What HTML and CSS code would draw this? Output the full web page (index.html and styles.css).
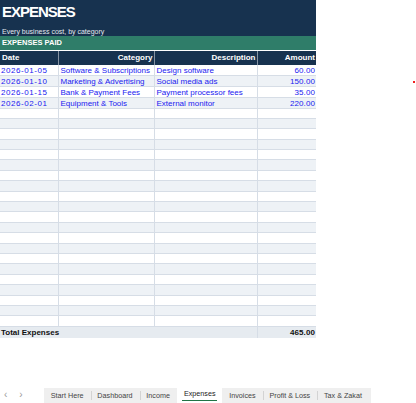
FILE: index.html
```html
<!DOCTYPE html>
<html>
<head>
<meta charset="utf-8">
<link rel="stylesheet" href="styles.css">
</head>
<body>
<div class="page">
  <div class="sheet">
    <div class="title-band">
      <div class="title">EXPENSES</div>
      <div class="subtitle">Every business cost, by category</div>
    </div>
    <div class="section">EXPENSES PAID</div>
    <table class="grid">
      <colgroup>
        <col class="c-date"><col class="c-cat"><col class="c-desc"><col class="c-amt">
      </colgroup>
      <thead>
        <tr><th class="left">Date</th><th>Category</th><th>Description</th><th>Amount</th></tr>
      </thead>
      <tbody>
        <tr><td class="date">2026-01-05</td><td>Software &amp; Subscriptions</td><td>Design software</td><td class="num">60.00</td></tr>
        <tr><td class="date">2026-01-10</td><td>Marketing &amp; Advertising</td><td>Social media ads</td><td class="num">150.00</td></tr>
        <tr><td class="date">2026-01-15</td><td>Bank &amp; Payment Fees</td><td>Payment processor fees</td><td class="num">35.00</td></tr>
        <tr><td class="date">2026-02-01</td><td>Equipment &amp; Tools</td><td>External monitor</td><td class="num">220.00</td></tr>
        <tr><td></td><td></td><td></td><td></td></tr>
        <tr><td></td><td></td><td></td><td></td></tr>
        <tr><td></td><td></td><td></td><td></td></tr>
        <tr><td></td><td></td><td></td><td></td></tr>
        <tr><td></td><td></td><td></td><td></td></tr>
        <tr><td></td><td></td><td></td><td></td></tr>
        <tr><td></td><td></td><td></td><td></td></tr>
        <tr><td></td><td></td><td></td><td></td></tr>
        <tr><td></td><td></td><td></td><td></td></tr>
        <tr><td></td><td></td><td></td><td></td></tr>
        <tr><td></td><td></td><td></td><td></td></tr>
        <tr><td></td><td></td><td></td><td></td></tr>
        <tr><td></td><td></td><td></td><td></td></tr>
        <tr><td></td><td></td><td></td><td></td></tr>
        <tr><td></td><td></td><td></td><td></td></tr>
        <tr><td></td><td></td><td></td><td></td></tr>
        <tr><td></td><td></td><td></td><td></td></tr>
        <tr><td></td><td></td><td></td><td></td></tr>
        <tr><td></td><td></td><td></td><td></td></tr>
        <tr><td></td><td></td><td></td><td></td></tr>
        <tr><td></td><td></td><td></td><td></td></tr>
      </tbody>
      <tfoot>
        <tr><td colspan="3" class="total-label">Total Expenses</td><td class="num total-val">465.00</td></tr>
      </tfoot>
    </table>
  </div>
  <span class="marker"></span>
</div>
<div class="tabbar">
  <div class="nav"><span>&lsaquo;</span><span>&rsaquo;</span></div>
  <div class="tabs">
    <span class="tab">Start Here</span>
    <span class="tab">Dashboard</span>
    <span class="tab">Income</span>
    <span class="tab active">Expenses</span>
    <span class="tab">Invoices</span>
    <span class="tab">Profit &amp; Loss</span>
    <span class="tab">Tax &amp; Zakat</span>
  </div>
</div>
</body>
</html>
```
FILE: styles.css
```css
* { box-sizing: border-box; }
html, body { margin: 0; padding: 0; background: #fff; }
body {
  width: 416px;
  height: 403px;
  overflow: hidden;
  font-family: "Liberation Sans", Arial, sans-serif;
  position: relative;
}
.page { height: 386px; position: relative; }
.sheet { width: 316px; }
.title-band {
  background: #17324f;
  color: #fff;
  height: 36px;
  padding: 4px 0 0 2px;
}
.title { font-size: 15px; font-weight: bold; line-height: 16px; letter-spacing: -1px; }
.subtitle { font-size: 7px; line-height: 9px; margin-top: 7px; color: #e3e8ee; }
.section {
  background: #2f7d69;
  color: #fff;
  font-size: 7.5px;
  font-weight: bold;
  height: 14px;
  line-height: 14px;
  padding-left: 2px;
}
.grid {
  width: 316px;
  border-collapse: collapse;
  table-layout: fixed;
  font-size: 8px;
}
.c-date { width: 58px; }
.c-cat { width: 96px; }
.c-desc { width: 103px; }
.c-amt { width: 59px; }
.grid th {
  background: #17324f;
  color: #fff;
  font-weight: bold;
  text-align: right;
  height: 14px;
  padding: 1px 1px 0 2px;
  border-left: 1px solid #8593a3;
  border-top: 1px solid #fff;
  line-height: 12px;
}
.grid th.left { text-align: left; border-left: none; }
.grid td {
  height: 10.4px;
  padding: 1px 1px 0 2px;
  line-height: 9px;
  color: #2020f0;
  border-left: 1px solid #d6dde6;
  border-bottom: 1px solid #d6dde6;
  white-space: nowrap;
  overflow: hidden;
}
.grid td.date { padding-left: 1px; letter-spacing: 0.55px; }
.grid td:first-child { border-left: none; }
.grid tbody tr:nth-child(even) td { background: #eef2f6; }
.grid td.num { text-align: right; letter-spacing: 0.1px; }
.grid tfoot td {
  background: #e6ebf0;
  color: #111;
  font-weight: bold;
  height: 12px;
  border-bottom: none;
}
.grid tfoot td.total-label { padding-left: 1px; }
.marker {
  position: absolute;
  left: 413px;
  top: 81px;
  width: 2px;
  height: 2px;
  background: #f02020;
}
.tabbar {
  position: absolute;
  left: 0;
  bottom: 0;
  width: 416px;
  height: 17px;
  display: flex;
  align-items: flex-end;
  font-family: "Liberation Sans", Arial, sans-serif;
  font-size: 7.2px;
  color: #444;
}
.nav {
  width: 44px;
  height: 17px;
  display: flex;
  gap: 12px;
  padding-left: 4px;
  align-items: center;
  color: #9a9a9a;
  font-size: 10px;
}
.tabs {
  display: flex;
  height: 15px;
  background: #efefef;
  padding-right: 2px;
}
.tab {
  display: flex;
  align-items: center;
  padding: 0 7px 0 6.8px;
  position: relative;
}
.tab + .tab::before {
  content: "";
  position: absolute;
  left: 0;
  top: 3px;
  bottom: 3px;
  border-left: 1px solid #d3d3d3;
}
.tab.active {
  background: #fff;
  color: #1a1a1a;
  margin-top: -2px;
  padding: 0 7px 2px;
}
.tab.active::after {
  content: "";
  position: absolute;
  left: 5px;
  right: 5px;
  bottom: 2px;
  border-bottom: 1px solid #217346;
}
.tab.active::before, .tab.active + .tab::before { display: none; }
```
